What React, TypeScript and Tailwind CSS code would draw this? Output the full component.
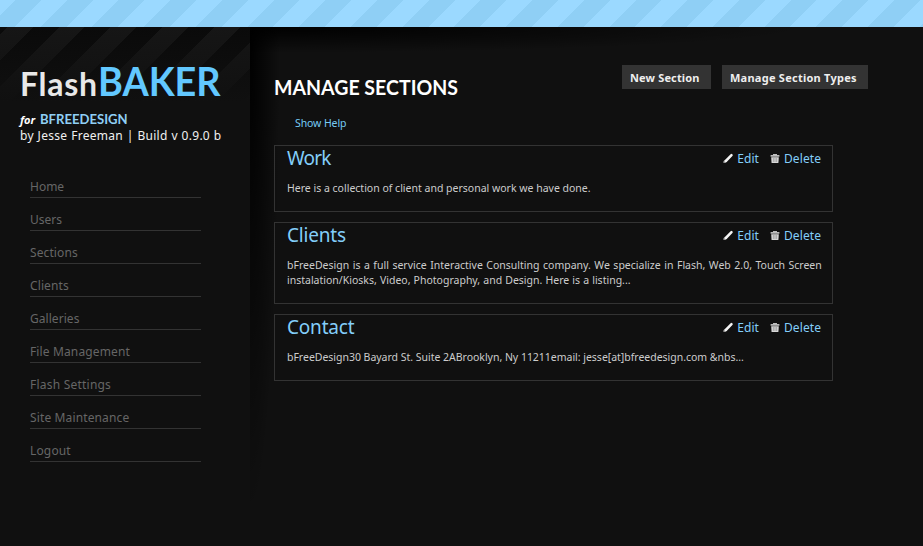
import React from "react";

const sans = "font-['Noto_Sans',sans-serif]";

const nav = [
  { label: "Home", cls: "" },
  { label: "Users", cls: "" },
  { label: "Sections", cls: "tracking-[0.1px]" },
  { label: "Clients", cls: "tracking-[0.1px]" },
  { label: "Galleries", cls: "tracking-[0.05px]" },
  { label: "File Management", cls: "tracking-[0.13px]" },
  { label: "Flash Settings", cls: "tracking-[0.22px]" },
  { label: "Site Maintenance", cls: "tracking-[0.13px]" },
  { label: "Logout", cls: "tracking-[0.15px]" },
];

type Section = {
  title: string;
  titleCls: string;
  height: string;
  lines: { text: string; cls: string }[];
};

const sections: Section[] = [
  {
    title: "Work",
    titleCls: "tracking-[-0.8px]",
    height: "h-[67px]",
    lines: [
      { text: "Here is a collection of client and personal work we have done.", cls: "" },
    ],
  },
  {
    title: "Clients",
    titleCls: "tracking-[-0.2px]",
    height: "h-[82px]",
    lines: [
      {
        text: "bFreeDesign is a full service Interactive Consulting company. We specialize in Flash, Web 2.0, Touch Screen",
        cls: "[word-spacing:0.8px]",
      },
      {
        text: "instalation/Kiosks, Video, Photography, and Design. Here is a listing...",
        cls: "[word-spacing:0.4px]",
      },
    ],
  },
  {
    title: "Contact",
    titleCls: "tracking-[-0.2px]",
    height: "h-[67px]",
    lines: [
      {
        text: "bFreeDesign30 Bayard St. Suite 2ABrooklyn, Ny 11211email: jesse[at]bfreedesign.com &nbs...",
        cls: "tracking-[-0.02px]",
      },
    ],
  },
];

function Pencil() {
  return (
    <svg className="h-[11px] w-[11px]" viewBox="0 0 11 11">
      <path d="M.4 10V8.2L2 6.8l1.8 1.8L2.4 10z" fill="#999" />
      <path d="M2.8 8L8.5 2.2" stroke="#f4f4f4" strokeWidth="2.5" strokeLinecap="round" />
    </svg>
  );
}

function Trash() {
  return (
    <svg className="h-[10px] w-[10px]" viewBox="0 0 10 10">
      <path d="M3 0h4v1h2.4v1.8H.6V1H3z" fill="#bbb" />
      <path d="M1.2 3.2h7.6L8.4 9H1.6z" fill="#d8d8d8" />
      <path d="M3.4 4v4M5 4v4M6.6 4v4" stroke="#888" strokeWidth=".6" />
    </svg>
  );
}

export default function App() {
  return (
    <div className={`flex h-[546px] w-[923px] flex-col overflow-hidden bg-[#101010] ${sans}`}>
      <header className="h-[27px] shrink-0 bg-[repeating-linear-gradient(135deg,#9bd9ff_0px,#9bd9ff_11px,#8fcff5_11px,#8fcff5_29.3px,#9bd9ff_29.3px,#9bd9ff_36.56px)]" />
      <div className="flex flex-1">
        <aside className="w-[250px] shrink-0 bg-[linear-gradient(to_bottom,transparent,#101010_75px),repeating-linear-gradient(135deg,#0a0a0a_0px,#0a0a0a_5.2px,#161616_5.2px,#161616_23.5px,#0a0a0a_23.5px,#0a0a0a_36.56px)] pt-[29px]">
          <h1 className="ml-5 flex h-[52px] items-baseline font-['Lato'] whitespace-nowrap">
            <span className="w-[78px] text-[32px] leading-[51px] font-bold tracking-[0.75px] text-[#e8e8e8]">Flash</span>
            <span className="origin-left scale-x-[0.945] text-[40px] leading-[51px] font-bold text-[#62c8ff]">BAKER</span>
          </h1>
          <p className="ml-5 flex h-[20px] items-baseline gap-[5px] pt-px whitespace-nowrap">
            <span className="text-[11px] leading-5 font-bold text-white italic">for</span>
            <span className="origin-left scale-x-[0.935] font-['Lato'] text-[14px] leading-5 font-bold text-[#8fcff5]">BFREEDESIGN</span>
          </p>
          <p className="ml-5 text-[12px] leading-[16px] tracking-[0.28px] [word-spacing:0.4px] whitespace-nowrap text-[#f0f0f0]">
            by Jesse Freeman | Build v 0.9.0 b
          </p>
          <nav className="mt-[21px] ml-[30px] w-[171px]">
            {nav.map((n) => (
              <a key={n.label} className={`flex h-[33px] items-end border-b border-[#333] text-[12px] leading-[21px] text-[#666] ${n.cls}`}>
                {n.label}
              </a>
            ))}
          </nav>
        </aside>
        <main className="flex-1 bg-[radial-gradient(ellipse_30px_490px_at_0_0,#000,transparent),radial-gradient(ellipse_560px_26px_at_0_0,#000,transparent)] pl-[24px]">
          <div className="flex h-[118px] w-[594px] justify-between">
            <div>
              <h2 className="mt-[45px] w-max origin-left scale-x-[0.93] font-['Lato'] text-[21px] leading-[30px] font-bold whitespace-nowrap text-white">
                MANAGE SECTIONS
              </h2>
              <a className="mt-[13px] ml-[21px] block text-[10.5px] leading-4 tracking-[-0.1px] text-[#76cbf5]">Show Help</a>
            </div>
            <div className="mt-[38px] flex gap-[11px]">
              <button className="h-6 w-[89px] bg-[#333] pt-[2px] pl-2 text-left text-[11px] font-bold tracking-[0.15px] whitespace-nowrap text-[#eee]">
                New Section
              </button>
              <button className="h-6 w-[146px] bg-[#333] pt-[2px] pl-2 text-left text-[11px] font-bold tracking-[0.25px] whitespace-nowrap text-[#eee]">
                Manage Section Types
              </button>
            </div>
          </div>
          <div className="flex w-[559px] flex-col gap-[10px]">
            {sections.map((s) => (
              <section key={s.title} className={`${s.height} border border-[#333] pl-3`}>
                <div className="flex h-[35px] justify-between">
                  <h3 className={`text-[19px] leading-[25px] text-[#83cefa] ${s.titleCls}`}>{s.title}</h3>
                  <div className="flex h-[25px] items-center pr-[11px] text-[12px] text-[#83cefa]">
                    <Pencil />
                    <a className="ml-[3px] tracking-[0.1px]">Edit</a>
                    <span className="ml-[11px]">
                      <Trash />
                    </span>
                    <a className="ml-[4px] tracking-[0.08px]">Delete</a>
                  </div>
                </div>
                {s.lines.map((l) => (
                  <p key={l.text} className={`text-[10.5px] leading-[15px] whitespace-nowrap text-[#ccc] ${l.cls}`}>
                    {l.text}
                  </p>
                ))}
              </section>
            ))}
          </div>
        </main>
      </div>
    </div>
  );
}
